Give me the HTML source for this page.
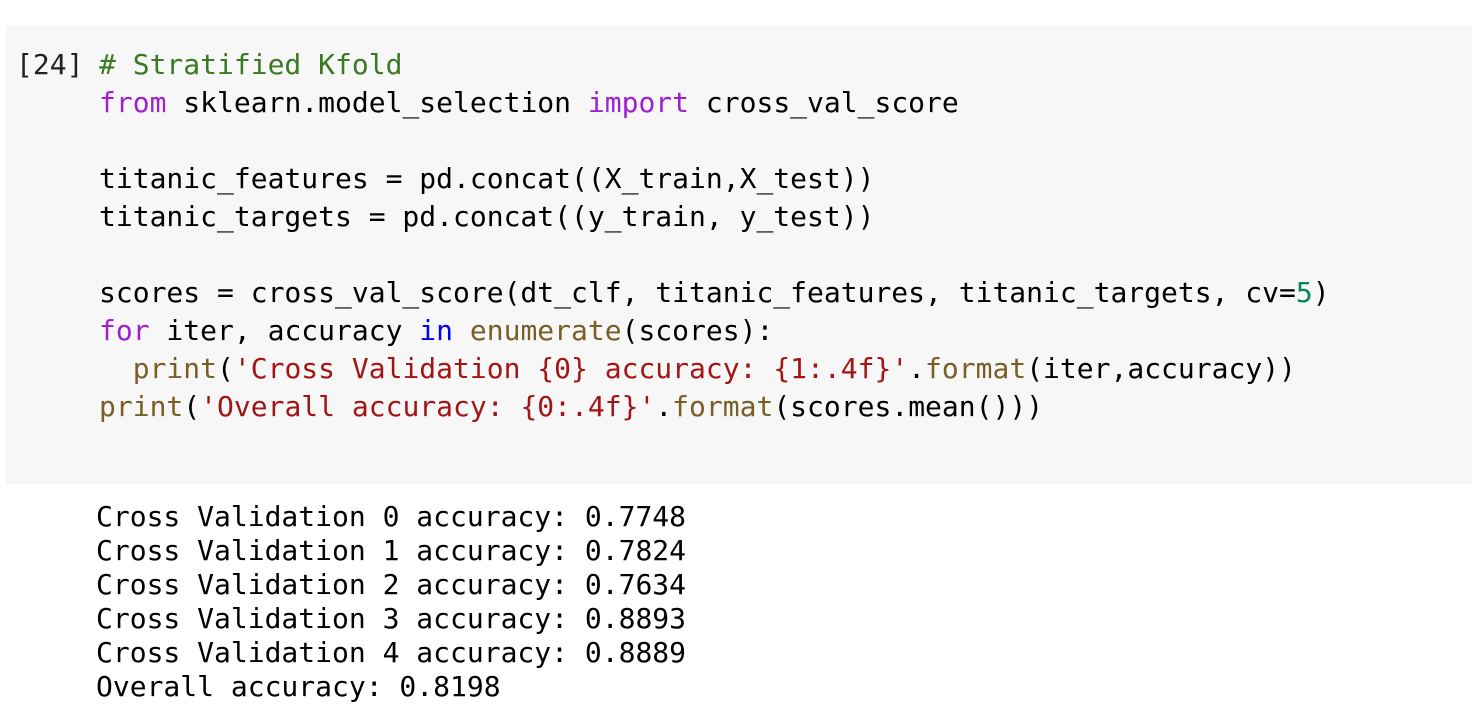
<!DOCTYPE html>
<html><head><meta charset="utf-8"><style>
html,body{margin:0;padding:0;width:1472px;height:720px;background:#fff;overflow:hidden}
body{font-family:"DejaVu Sans Mono","Liberation Mono",monospace;font-size:28px;color:#000}
.box{position:absolute;left:6px;top:26px;width:1466px;height:458px;background:#f7f7f7}
.l{position:absolute;white-space:pre;line-height:38px}
.c{left:99px}
.o{left:96px;line-height:34px}
.g{color:#3a7a22}.k{color:#a020d0}.s{color:#a31515}.f{color:#795e26}.b{color:#0000ff}.n{color:#098658}
</style></head><body>
<div class="box"></div>
<div class="l" style="left:16px;top:46px;color:#212121">[24]</div>
<div class="l c" style="top:46px"><span class="g"># Stratified Kfold</span></div>
<div class="l c" style="top:84px"><span class="k">from</span> sklearn.model_selection <span class="k">import</span> cross_val_score</div>
<div class="l c" style="top:160px">titanic_features = pd.concat((X_train,X_test))</div>
<div class="l c" style="top:198px">titanic_targets = pd.concat((y_train, y_test))</div>
<div class="l c" style="top:274px">scores = cross_val_score(dt_clf, titanic_features, titanic_targets, cv=<span class="n">5</span>)</div>
<div class="l c" style="top:312px"><span class="k">for</span> iter, accuracy <span class="b">in</span> <span class="f">enumerate</span>(scores):</div>
<div class="l c" style="top:350px">  <span class="f">print</span>(<span class="s">'Cross Validation {0} accuracy: {1:.4f}'</span>.<span class="f">format</span>(iter,accuracy))</div>
<div class="l c" style="top:388px"><span class="f">print</span>(<span class="s">'Overall accuracy: {0:.4f}'</span>.<span class="f">format</span>(scores.mean()))</div>
<div class="l o" style="top:500px">Cross Validation 0 accuracy: 0.7748</div>
<div class="l o" style="top:534px">Cross Validation 1 accuracy: 0.7824</div>
<div class="l o" style="top:568px">Cross Validation 2 accuracy: 0.7634</div>
<div class="l o" style="top:602px">Cross Validation 3 accuracy: 0.8893</div>
<div class="l o" style="top:636px">Cross Validation 4 accuracy: 0.8889</div>
<div class="l o" style="top:670px">Overall accuracy: 0.8198</div>
</body></html>
